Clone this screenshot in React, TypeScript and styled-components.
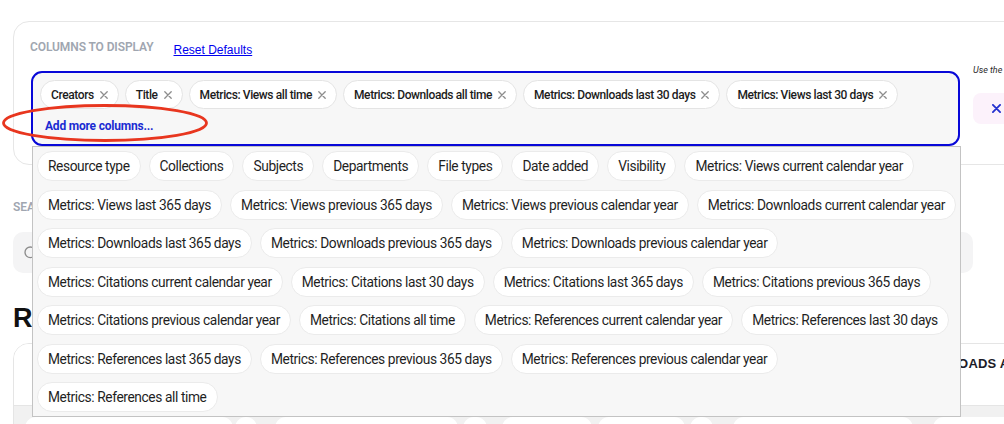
import React from 'react';
import styled, { createGlobalStyle } from 'styled-components';
import { Search } from 'lucide-react';

const FONT = `Roboto, "Liberation Sans", Arial, sans-serif`;
const HEAD_FONT = `"Liberation Sans", Arial, Helvetica, sans-serif`;

const GlobalStyle = createGlobalStyle`
  html, body {
    margin: 0;
    padding: 0;
    background: #ffffff;
    overflow: hidden;
  }
  body {
    font-family: ${FONT};
    color: #1f1f1f;
  }
  * {
    box-sizing: border-box;
  }
`;

const Page = styled.div`
  position: relative;
  width: 1004px;
  height: 424px;
  overflow: hidden;
  padding: 21px 0 0 13px;
`;

const Card = styled.section`
  width: 1080px;
  height: 144px;
  border: 1px solid #e6e6e6;
  border-radius: 16px;
  padding: 17px 16px 16px 16px;
  display: flex;
  gap: 13px;
`;

const LeftCol = styled.div`
  width: 930px;
  flex-shrink: 0;
`;

const LabelRow = styled.div`
  display: flex;
  align-items: center;
  gap: 20px;
  height: 16px;
`;

const SectionLabel = styled.div`
  font-family: ${FONT};
  font-size: 12px;
  line-height: 16px;
  font-weight: 600;
  letter-spacing: -0.1px;
  text-transform: uppercase;
  color: #a0a6b0;
`;

const ResetLink = styled.button`
  background: none;
  border: 0;
  padding: 0;
  margin-top: 5px;
  font-family: ${HEAD_FONT};
  font-size: 12px;
  color: #0000ee;
  text-decoration: underline;
  cursor: pointer;
`;

const SelectWrap = styled.div`
  position: relative;
  margin: 16px 0 0 1px;
  width: 929px;
`;

const Control = styled.div`
  height: 75px;
  border: 2px solid #0808d8;
  border-radius: 11px;
  background: #f7f7f7;
  padding: 7px 7px 0;
`;

const ChipRow = styled.div`
  display: flex;
  gap: 6px;
`;

const Chip = styled.span`
  display: inline-flex;
  align-items: center;
  gap: 6px;
  height: 29px;
  padding: 0 10px;
  border: 1px solid #e4e4e4;
  border-radius: 15px;
  background: #ffffff;
  font-size: 12px;
  font-weight: 500;
  letter-spacing: -0.4px;
  color: #1c1c1c;
  white-space: nowrap;
`;

const RemoveIcon = styled.svg`
  width: 8px;
  height: 8px;
  flex-shrink: 0;
`;

const AddMore = styled.div`
  margin: 9px 0 0 5px;
  font-size: 12px;
  line-height: 16px;
  font-weight: 700;
  letter-spacing: -0.2px;
  color: #1a2bd2;
`;

const Menu = styled.div`
  position: absolute;
  top: 100%;
  left: 1px;
  width: 929px;
  background: #f7f7f7;
  border: 1px solid #c3c3c3;
  padding: 4px;
  display: flex;
  flex-direction: column;
  gap: 8.5px;
  z-index: 5;
`;

const OptionRow = styled.div`
  display: flex;
  gap: 8px;
`;

const Option = styled.button`
  height: 30px;
  padding: 0 10px;
  border: 1px solid #ebebeb;
  border-radius: 15px;
  background: #ffffff;
  font-family: ${FONT};
  font-size: 13.75px;
  letter-spacing: -0.4px;
  color: #1f1f1f;
  white-space: nowrap;
  cursor: pointer;
`;

const RightCol = styled.div`
  padding-top: 25px;
  display: flex;
  flex-direction: column;
  gap: 17px;
`;

const Hint = styled.div`
  font-size: 9px;
  line-height: 12px;
  font-style: italic;
  color: #2a2a2a;
  white-space: nowrap;
`;

const ClearButton = styled.button`
  width: 90px;
  height: 31px;
  border: 0;
  border-radius: 8px;
  background: #fcf2fb;
  padding-left: 19px;
  display: flex;
  align-items: center;
`;

const SearchSection = styled.div`
  margin-top: 34px;
`;

const SearchBox = styled.div`
  margin-top: 17px;
  width: 960px;
  height: 41px;
  border-radius: 10px;
  background: #f4f4f5;
  display: flex;
  align-items: center;
  padding-left: 10px;
  color: #8c8c8c;
`;

const Heading = styled.h2`
  margin: 29px 0 0;
  font-family: ${HEAD_FONT};
  font-size: 27px;
  line-height: 32px;
  font-weight: 700;
  color: #111111;
`;

const TableCard = styled.div`
  margin-top: 9px;
  width: 1080px;
  height: 140px;
  border: 1px solid #e5e5e5;
  border-radius: 16px;
  overflow: hidden;
`;

const HeaderRow = styled.div`
  display: grid;
  grid-template-columns: 40px 300px 280px 274px auto;
  align-items: start;
  height: 62px;
  padding-top: 12px;
  border-bottom: 1px solid #e5e5e5;
  background: #ffffff;
`;

const HeaderCell = styled.div`
  font-family: ${HEAD_FONT};
  font-size: 13px;
  line-height: 15px;
  font-weight: 700;
  letter-spacing: 0.2px;
  text-transform: uppercase;
  color: #1c1c28;
  white-space: nowrap;
`;

const BodyRow = styled.div`
  display: flex;
  align-items: flex-start;
  height: 80px;
  background: #f1f1f1;
  padding: 11px 0 0 11px;
`;

const Skeleton = styled.div<{ $w: number; $ml: number }>`
  width: ${(p) => p.$w}px;
  margin-left: ${(p) => p.$ml}px;
  height: 22px;
  border-radius: 11px;
  background: #ffffff;
  flex-shrink: 0;
`;

const Annotation = styled.svg`
  position: absolute;
  left: 0;
  top: 100px;
  z-index: 10;
  pointer-events: none;
`;

const selected = [
  'Creators',
  'Title',
  'Metrics: Views all time',
  'Metrics: Downloads all time',
  'Metrics: Downloads last 30 days',
  'Metrics: Views last 30 days',
];

const optionRows = [
  [
    'Resource type',
    'Collections',
    'Subjects',
    'Departments',
    'File types',
    'Date added',
    'Visibility',
    'Metrics: Views current calendar year',
  ],
  [
    'Metrics: Views last 365 days',
    'Metrics: Views previous 365 days',
    'Metrics: Views previous calendar year',
    'Metrics: Downloads current calendar year',
  ],
  [
    'Metrics: Downloads last 365 days',
    'Metrics: Downloads previous 365 days',
    'Metrics: Downloads previous calendar year',
  ],
  [
    'Metrics: Citations current calendar year',
    'Metrics: Citations last 30 days',
    'Metrics: Citations last 365 days',
    'Metrics: Citations previous 365 days',
  ],
  [
    'Metrics: Citations previous calendar year',
    'Metrics: Citations all time',
    'Metrics: References current calendar year',
    'Metrics: References last 30 days',
  ],
  [
    'Metrics: References last 365 days',
    'Metrics: References previous 365 days',
    'Metrics: References previous calendar year',
  ],
  ['Metrics: References all time'],
];

const skeletons = [
  { w: 208, ml: 0 },
  { w: 22, ml: 2 },
  { w: 183, ml: 18 },
  { w: 24, ml: 5 },
  { w: 90, ml: 15 },
  { w: 87, ml: 6 },
  { w: 23, ml: 5 },
  { w: 180, ml: 20 },
  { w: 90, ml: 20 },
];

const Cross: React.FC<{ color: string; size?: number; stroke?: number }> = ({ color, size = 8, stroke = 1.3 }) => (
  <RemoveIcon viewBox="0 0 8 8" style={{ width: size, height: size }}>
    <path d="M0.8 0.8 L7.2 7.2 M7.2 0.8 L0.8 7.2" stroke={color} strokeWidth={stroke} strokeLinecap="round" fill="none" />
  </RemoveIcon>
);

const App: React.FC = () => {
  return (
    <>
      <GlobalStyle />
      <Page>
        <Card>
          <LeftCol>
            <LabelRow>
              <SectionLabel>Columns to display</SectionLabel>
              <ResetLink type="button">Reset Defaults</ResetLink>
            </LabelRow>
            <SelectWrap>
              <Control>
                <ChipRow>
                  {selected.map((name) => (
                    <Chip key={name}>
                      {name}
                      <Cross color="#8d8d8d" />
                    </Chip>
                  ))}
                </ChipRow>
                <AddMore>Add more columns...</AddMore>
              </Control>
              <Menu>
                {optionRows.map((row, i) => (
                  <OptionRow key={i}>
                    {row.map((name) => (
                      <Option key={name} type="button">
                        {name}
                      </Option>
                    ))}
                  </OptionRow>
                ))}
              </Menu>
            </SelectWrap>
          </LeftCol>
          <RightCol>
            <Hint>Use the buttons below to choose which columns are shown</Hint>
            <ClearButton type="button">
              <Cross color="#2431cf" size={9} stroke={1.6} />
            </ClearButton>
          </RightCol>
        </Card>

        <SearchSection>
          <SectionLabel>Search</SectionLabel>
          <SearchBox>
            <Search size={16} strokeWidth={2} />
          </SearchBox>
        </SearchSection>

        <Heading>Resources</Heading>

        <TableCard>
          <HeaderRow>
            <span />
            <HeaderCell>Title</HeaderCell>
            <HeaderCell>Creators</HeaderCell>
            <HeaderCell>Views all time</HeaderCell>
            <HeaderCell>Downloads all time</HeaderCell>
          </HeaderRow>
          <BodyRow>
            {skeletons.map((s, i) => (
              <Skeleton key={i} $w={s.w} $ml={s.ml} />
            ))}
          </BodyRow>
        </TableCard>

        <Annotation width="212" height="46" viewBox="0 0 212 46">
          <ellipse cx="105" cy="23" rx="101.5" ry="17.5" fill="none" stroke="#e8361f" strokeWidth="2.8" />
        </Annotation>
      </Page>
    </>
  );
};

export default App;
